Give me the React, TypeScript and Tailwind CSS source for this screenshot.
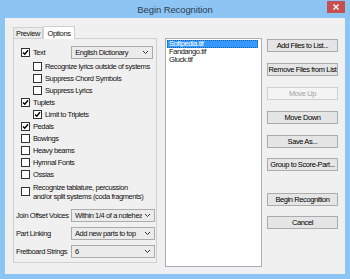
import React from 'react';

const Check = ({ on }: { on?: boolean }) => (
  <div className="w-[9px] h-[9px] shrink-0 border border-[#333333] bg-white flex items-center justify-center">
    {on && (
      <svg width="7" height="7" viewBox="0 0 7 7">
        <path d="M1 3.4 L2.8 5.3 L6 1.3" fill="none" stroke="#000" strokeWidth="1.4" />
      </svg>
    )}
  </div>
);

const Row = ({ label, on, sub }: { label: string; on?: boolean; sub?: boolean }) => (
  <div className={`h-[12px] flex items-center gap-[3px] ${sub ? 'pl-[19px]' : 'pl-[7px]'}`}>
    <Check on={on} />
    <span className="whitespace-nowrap">{label}</span>
  </div>
);

const Chevron = () => (
  <svg width="7" height="5" viewBox="0 0 7 5" className="shrink-0">
    <path d="M1 1 L3.5 3.5 L6 1" fill="none" stroke="#333" strokeWidth="1" />
  </svg>
);

const Select = ({ value, w }: { value: string; w: string }) => (
  <div className={`${w} h-[13px] border border-[#acacac] bg-[#ebebeb] flex items-center pl-[3px] pr-[3px] gap-[2px]`}>
    <span className="flex-1 overflow-hidden whitespace-nowrap">{value}</span>
    <Chevron />
  </div>
);

const SelectRow = ({ label, value, mt }: { label: string; value: string; mt: string }) => (
  <div className={`h-[14px] ${mt} flex items-center pl-[2px] pr-[1px]`}>
    <span className="whitespace-nowrap">{label}</span>
    <div className="ml-auto">
      <Select value={value} w="w-[84px]" />
    </div>
  </div>
);

const Btn = ({ label, disabled, mt }: { label: string; disabled?: boolean; mt: string }) => (
  <div
    className={`h-[13px] ${mt} flex items-center justify-center border whitespace-nowrap ${
      disabled ? 'border-[#cfcfcf] bg-[#f4f4f4] text-[#a3a3a3]' : 'border-[#acacac] bg-[#e5e5e5] text-black'
    }`}
  >
    {label}
  </div>
);

export default function App() {
  return (
    <div className="w-[350px] h-[279px] bg-[#8cc4f4] flex flex-col font-['Liberation_Sans',Arial,sans-serif] text-[7.5px] tracking-[-0.4px] leading-[9px] text-[#111]">
      {/* Title bar */}
      <div className="h-[18px] flex">
        <div className="flex-1" />
        <div className="flex items-center text-[9.5px] tracking-[-0.1px] text-[#2d3e50]">Begin Recognition</div>
        <div className="flex-1 flex justify-end">
          <div className="mt-[1px] mr-[5px] w-[18px] h-[12px] bg-[#c75050] flex items-center justify-center">
            <svg width="6" height="6" viewBox="0 0 6 6">
              <path d="M0.5 0.5 L5.5 5.5 M5.5 0.5 L0.5 5.5" stroke="#fff" strokeWidth="1.4" />
            </svg>
          </div>
        </div>
      </div>

      {/* Client area */}
      <div className="flex-1 mx-[5px] mb-[5px] bg-[#f0f0f0] flex pl-[8px] pt-[7px]">
        {/* Tabs */}
        <div className="w-[144px] flex flex-col">
          <div className="h-[13px] flex items-end">
            <div className="w-[30px] h-[11px] border border-b-0 border-[#d0d0d0] bg-[#ececec] flex items-center justify-center">
              Preview
            </div>
            <div className="relative z-10 -mb-px w-[32px] h-[13px] border border-b-0 border-[#d0d0d0] bg-white flex items-center justify-center">
              Options
            </div>
          </div>
          <div className="h-[225px] border border-[#d0d0d0] bg-[#f0f0f0] flex flex-col pt-[6px]">
            <div className="h-[14px] flex items-center pl-[7px]">
              <Check on />
              <span className="ml-[3px]">Text</span>
              <div className="ml-[26px]">
                <Select value="English Dictionary" w="w-[82px]" />
              </div>
            </div>
            <div className="mt-[1px]" />
            <Row label="Recognize lyrics outside of systems" sub />
            <Row label="Suppress Chord Symbols" sub />
            <Row label="Suppress Lyrics" sub />
            <Row label="Tuplets" on />
            <Row label="Limit to Triplets" on sub />
            <Row label="Pedals" on />
            <Row label="Bowings" />
            <Row label="Heavy beams" />
            <Row label="Hymnal Fonts" />
            <Row label="Ossias" />
            <div className="h-[19px] mt-[2px] flex items-center gap-[3px] pl-[7px]">
              <Check />
              <div className="flex flex-col">
                <span className="whitespace-nowrap">Recognize tablature, percussion</span>
                <span className="whitespace-nowrap">and/or split systems (coda fragments)</span>
              </div>
            </div>
            <SelectRow label="Join Offset Voices" value="Within 1/4 of a notehead" mt="mt-[7px]" />
            <SelectRow label="Part Linking" value="Add new parts to top" mt="mt-[4px]" />
            <SelectRow label="Fretboard Strings" value="6" mt="mt-[4px]" />
          </div>
        </div>

        {/* File list */}
        <div className="ml-[8px] mt-[13px] w-[97px] h-[229px] border border-[#abadb3] bg-white pt-px pl-px">
          <div className="h-[8px] leading-[8px] mr-[3px] bg-[#3399ff] text-white pl-[2px] outline-dotted outline-1 outline-[#1c5fa3] -outline-offset-1">
            Softpedia.tif
          </div>
          <div className="h-[8px] leading-[8px] pl-[2px]">Fandango.tif</div>
          <div className="h-[8px] leading-[8px] pl-[2px]">Gluck.tif</div>
        </div>

        {/* Buttons */}
        <div className="ml-[5px] mt-[14px] w-[71px] flex flex-col">
          <Btn label="Add Files to List..." mt="mt-0" />
          <Btn label="Remove Files from List" mt="mt-[11px]" />
          <Btn label="Move Up" disabled mt="mt-[11px]" />
          <Btn label="Move Down" mt="mt-[11px]" />
          <Btn label="Save As..." mt="mt-[11px]" />
          <Btn label="Group to Score-Part..." mt="mt-[10px]" />
          <Btn label="Begin Recognition" mt="mt-[22px]" />
          <Btn label="Cancel" mt="mt-[10px]" />
        </div>
      </div>
    </div>
  );
}
